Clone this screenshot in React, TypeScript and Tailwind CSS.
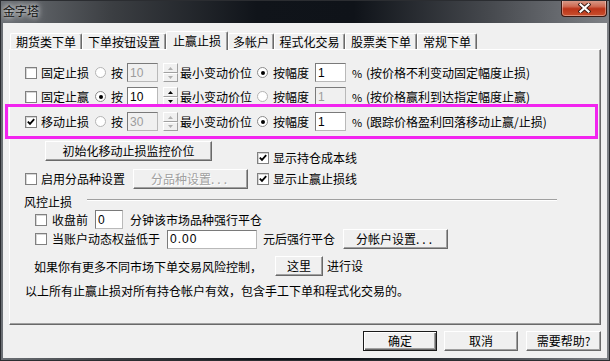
import clsx from "clsx"
import type {ReactNode} from "react"

type Cls = {className?: string}

const Check = ({checked, className}: {checked?: boolean} & Cls) => (
  <span
    className={clsx(
      "flex h-[12px] w-[12px] shrink-0 items-center justify-center border border-[#808080] bg-white shadow-[inset_1px_1px_0_#d6d6d6]",
      className
    )}
  >
    {checked && (
      <svg width="8" height="8" viewBox="0 0 8 8">
        <path d="M0.8 3.6 L3 5.9 L7.2 1.2" fill="none" stroke="#000" strokeWidth="1.8" />
      </svg>
    )}
  </span>
)

const Radio = ({checked, className}: {checked?: boolean} & Cls) => (
  <span
    className={clsx(
      "flex h-[11px] w-[11px] shrink-0 items-center justify-center rounded-full border bg-white",
      checked ? "border-[#8a8a8a]" : "border-[#b4b4b4]",
      className
    )}
  >
    {checked && <span className="h-[4px] w-[4px] rounded-full bg-black" />}
  </span>
)

const Edit = ({value, disabled, className}: {value: string; disabled?: boolean} & Cls) => (
  <span
    className={clsx(
      "flex h-[19px] shrink-0 items-center border border-[#b9b9b9] border-t-[#7a7a7a] border-l-[#7a7a7a] pl-[2px] font-['Liberation_Sans',sans-serif] text-[12px]",
      disabled ? "bg-[#f0f0f0] text-[#9c9c9c]" : "bg-white text-black",
      className
    )}
  >
    {value}
  </span>
)

const Spin = ({disabled, className}: {disabled?: boolean} & Cls) => {
  const c = disabled ? "#b0b0b0" : "#000"
  const half = "flex items-center justify-center border border-white border-r-[#a0a0a0] border-b-[#a0a0a0] bg-[#f0f0f0]"
  return (
    <span className={clsx("flex h-[19px] w-[15px] shrink-0 flex-col", className)}>
      <span className={clsx(half, "h-[10px]")}>
        <svg width="5" height="3" viewBox="0 0 5 3">
          <path d="M0 3 L2.5 0 L5 3 Z" fill={c} />
        </svg>
      </span>
      <span className={clsx(half, "h-[9px]")}>
        <svg width="5" height="3" viewBox="0 0 5 3">
          <path d="M0 0 L2.5 3 L5 0 Z" fill={c} />
        </svg>
      </span>
    </span>
  )
}

const Btn = ({children, disabled, def, className}: {children: ReactNode; disabled?: boolean; def?: boolean} & Cls) => (
  <span
    className={clsx(
      "flex shrink-0 items-center justify-center whitespace-nowrap bg-[#f0f0f0]",
      def
        ? "border border-[#1a1a1a] shadow-[inset_1px_1px_0_#fff,inset_-1px_-1px_0_#696969,inset_-2px_-2px_0_#a0a0a0]"
        : "border border-t-white border-l-white border-r-[#696969] border-b-[#696969] shadow-[inset_-1px_-1px_0_#a0a0a0]",
      disabled ? "text-[#a0a0a0] [text-shadow:1px_1px_0_#fff]" : "text-black",
      className
    )}
  >
    {children}
  </span>
)

const T = ({children, className}: {children: ReactNode} & Cls) => (
  <span className={clsx("shrink-0 whitespace-nowrap", className)}>{children}</span>
)

const tabs = [
  {label: "期货类下单", w: "w-[72px]"},
  {label: "下单按钮设置", w: "w-[84px]"},
  {label: "止赢止损", w: "w-[62px]", active: true},
  {label: "多帐户", w: "w-[46px]"},
  {label: "程式化交易", w: "w-[71px]"},
  {label: "股票类下单", w: "w-[72px]"},
  {label: "常规下单", w: "w-[60px]"},
]

const StopRow = ({
  className,
  checked,
  label,
  byTick,
  tick,
  note,
}: {
  className: string
  checked?: boolean
  label: string
  byTick?: boolean
  tick: string
  note: string
}) => (
  <div className={clsx("flex h-[19px] items-center", className)}>
    <Check className="ml-[15px]" checked={checked} />
    <T className="ml-[4px] w-[48px]">{label}</T>
    <Radio className="ml-[6px]" checked={byTick} />
    <T className="ml-[5px] w-[12px]">按</T>
    <Edit className="ml-[4px] w-[31px]" value={tick} disabled={!byTick} />
    <Spin className="ml-[5px]" disabled={!byTick} />
    <T className="ml-[2px] w-[72px]">最小变动价位</T>
    <Radio className="ml-[5px]" checked={!byTick} />
    <T className="ml-[5px] w-[36px]">按幅度</T>
    <Edit className="ml-[6px] w-[31px]" value="1" disabled={byTick} />
    <T className="ml-[6px] w-[14px] text-[11px]">%</T>
    <T>{note}</T>
  </div>
)

export default function App() {
  return (
    <div className="relative flex h-[361px] w-[610px] flex-col overflow-hidden border border-[#2b2d31] bg-[linear-gradient(90deg,#6c7075_0%,#3c3f43_18%,#10141a_42%,#0f1319_58%,#45484d_80%,#7e8186_100%)] font-['Noto_Sans_CJK_SC',sans-serif] text-[12px] leading-[14px] text-black">
      {/* title bar */}
      <div className="flex h-[22px] shrink-0 items-start">
        <span className="ml-[2px] mt-[3px] text-[12px] text-[#111] [text-shadow:0_0_5px_#fff,0_0_8px_rgba(255,255,255,0.7)]">
          金字塔
        </span>
        <div className="-mt-px ml-auto mr-[2px] flex h-[17px] w-[46px] items-center justify-center rounded-b-[4px] border border-t-0 border-[#3a1710] bg-[linear-gradient(#d9a08f,#cf6a52_40%,#bb3419_55%,#c9502e)] shadow-[inset_0_0_0_1px_rgba(255,255,255,0.35)]">
          <svg width="13" height="10" viewBox="0 0 13 10">
            <path d="M2.5 1.5 L10.5 8.5 M10.5 1.5 L2.5 8.5" stroke="#3a1a14" strokeWidth="4" strokeLinecap="square" />
            <path d="M2.5 1.5 L10.5 8.5 M10.5 1.5 L2.5 8.5" stroke="#fff" strokeWidth="2.2" strokeLinecap="square" />
          </svg>
        </div>
      </div>

      {/* client area */}
      <div className="mx-[2px] mb-[2px] flex flex-1 flex-col bg-[#f0f0f0]">
        {/* tabs */}
        <div className="ml-[7px] mt-[8px] flex h-[18px] items-end">
          {tabs.map((t) => (
            <div
              key={t.label}
              className={clsx(
                "flex shrink-0 justify-center whitespace-nowrap rounded-t-[2px] border-l border-t border-r border-white border-r-[#696969] bg-[#f0f0f0] shadow-[inset_-1px_0_0_#a0a0a0]",
                t.w,
                t.active ? "relative z-10 -mb-px h-[19px] items-start pt-[2px]" : "h-[16px] items-center"
              )}
            >
              {t.label}
            </div>
          ))}
        </div>

        {/* panel */}
        <div className="ml-[6px] flex h-[276px] w-[592px] flex-col border border-t-white border-l-white border-r-[#696969] border-b-[#696969] shadow-[inset_-1px_-1px_0_#a0a0a0]">
          <StopRow className="mt-[13px]" label="固定止损" tick="10" note="(按价格不利变动固定幅度止损)" />
          <StopRow className="mt-[5px]" label="固定止赢" byTick tick="10" note="(按价格赢利到达指定幅度止赢)" />
          <StopRow className="mt-[6px]" checked label="移动止损" tick="30" note="(跟踪价格盈利回落移动止赢/止损)" />

          <div className="mt-[10px] flex h-[20px] items-start">
            <Btn className="ml-[35px] h-[20px] w-[167px]">初始化移动止损监控价位</Btn>
            <div className="ml-[45px] mt-[10px] flex h-[14px] items-center">
              <Check checked />
              <T className="ml-[4px]">显示持仓成本线</T>
            </div>
          </div>

          <div className="mt-[8px] flex h-[20px] items-center">
            <Check className="ml-[15px]" />
            <T className="ml-[4px] w-[84px]">启用分品种设置</T>
            <Btn className="ml-[8px] h-[20px] w-[115px]" disabled>
              分品种设置<span className="tracking-[3px]">...</span>
            </Btn>
            <Check className="ml-[9px]" checked />
            <T className="ml-[4px]">显示止赢止损线</T>
          </div>

          <div className="mt-[6px] flex h-[14px] items-start">
            <T className="ml-[14px] w-[48px]">风控止损</T>
            <span className="ml-[15px] mt-[4px] h-[2px] w-[470px] border-t border-b border-t-[#a0a0a0] border-b-white" />
          </div>

          <div className="mt-[1px] flex h-[19px] items-center">
            <Check className="ml-[25px]" />
            <T className="ml-[5px] w-[36px]">收盘前</T>
            <Edit className="ml-[7px] w-[28px]" value="0" />
            <T className="ml-[7px]">分钟该市场品种强行平仓</T>
          </div>

          <div className="flex h-[20px] items-center">
            <Check className="ml-[25px]" />
            <T className="ml-[5px] w-[108px]">当账户动态权益低于</T>
            <Edit className="ml-[7px] w-[90px] tracking-[1px]" value="0.00" />
            <T className="ml-[6px] w-[72px]">元后强行平仓</T>
            <Btn className="ml-[8px] h-[20px] w-[105px]">
              分帐户设置<span className="tracking-[3px]">...</span>
            </Btn>
          </div>

          <div className="mt-[7px] flex h-[20px] items-center">
            <T className="ml-[24px] mt-[2px] w-[228px]">如果你有更多不同市场下单交易风险控制，</T>
            <Btn className="ml-[13px] h-[20px] w-[48px]">这里</Btn>
            <T className="ml-[4px]">进行设</T>
          </div>

          <div className="mt-[8px] flex h-[14px] items-center">
            <T className="ml-[15px]">以上所有止赢止损对所有持仓帐户有效，包含手工下单和程式化交易的。</T>
          </div>
        </div>

        {/* dialog buttons */}
        <div className="mt-[6px] flex h-[20px] justify-end pr-[6px]">
          <Btn className="h-[20px] w-[74px]" def>
            确定
          </Btn>
          <Btn className="ml-[7px] h-[20px] w-[74px]">取消</Btn>
          <Btn className="ml-[8px] h-[20px] w-[75px]">需要帮助?</Btn>
        </div>
      </div>

      {/* highlight annotation drawn over the dialog */}
      <div className="pointer-events-none absolute left-[4px] top-[103px] h-[35px] w-[593px] border-[3px] border-[#f224ef]" />
    </div>
  )
}
